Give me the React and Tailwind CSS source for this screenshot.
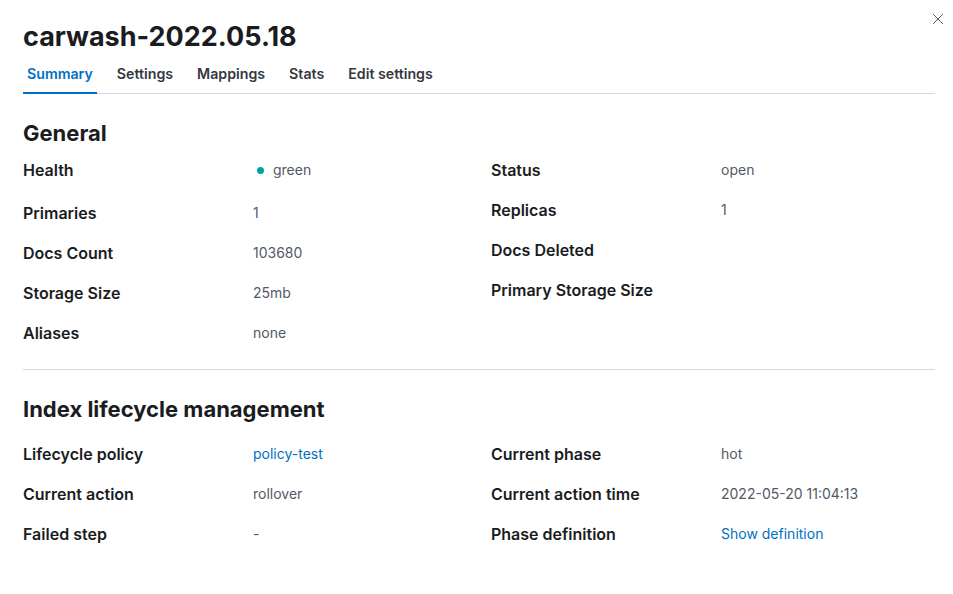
import { useState } from "react";

const CloseIcon = () => (
  <svg className="w-[12px] h-[12px] text-[#343741]" viewBox="0 0 16 16" fill="none" stroke="currentColor">
    <path strokeWidth={1.1} d="M1.5 1.5l13 13M14.5 1.5l-13 13" />
  </svg>
);

const tabs = ["Summary", "Settings", "Mappings", "Stats", "Edit settings"];

const Row = ({ label, children, tall }) => (
  <div className={`flex items-start pt-[4px] ${tall ? "h-[43px]" : "h-[40px]"}`}>
    <div className="w-[230px] shrink-0 text-[16px] leading-[24px] font-semibold text-[#1a1c21]">{label}</div>
    <div className="text-[14px] leading-[24px] text-[#535966]">{children}</div>
  </div>
);

const Link = ({ children }) => (
  <span className="text-[#0071c2] cursor-pointer hover:underline">{children}</span>
);

export default function App() {
  const [active, setActive] = useState("Summary");

  return (
    <div className="relative w-[953px] h-[594px] bg-white font-['Inter',sans-serif] text-[#1a1c21] overflow-hidden">
      <button className="absolute top-[12px] right-[8px] p-[1px]">
        <CloseIcon />
      </button>

      <div className="px-[23px] pr-[18px]">
        {/* Header */}
        <h1 className="pt-[17px] text-[27px] leading-[40px] font-bold text-[#1a1c21]">
          carwash-2022.05.18
        </h1>
        <div className="flex gap-[16px] border-b border-[#d3dae6] h-[38px] mt-[-1px]">
          {tabs.map((t) => (
            <button
              key={t}
              onClick={() => setActive(t)}
              className={`px-[4px] text-[14.2px] font-semibold leading-[20px] border-b-2 -mb-px pb-[1px] ${
                active === t ? "text-[#0071c2] border-[#0071c2]" : "text-[#343741] border-transparent"
              }`}
            >
              {t}
            </button>
          ))}
        </div>

        {/* General */}
        <h2 className="mt-[25px] text-[22px] leading-[28px] font-bold text-[#1a1c21]">General</h2>
        <div className="grid grid-cols-2 gap-x-[24px] mt-[7px]">
          <div className="flex flex-col">
            <Row label="Health" tall>
              <span className="flex items-center gap-[9px] ml-[4px]">
                <span className="w-[7px] h-[7px] rounded-full bg-[#00a69b]" />
                green
              </span>
            </Row>
            <Row label="Primaries">1</Row>
            <Row label="Docs Count">103680</Row>
            <Row label="Storage Size">25mb</Row>
            <Row label="Aliases">none</Row>
          </div>
          <div className="flex flex-col">
            <Row label="Status">open</Row>
            <Row label="Replicas">1</Row>
            <Row label="Docs Deleted"></Row>
            <Row label="Primary Storage Size"></Row>
          </div>
        </div>
        <hr className="mt-[12px] border-t border-[#d3dae6]" />

        {/* ILM */}
        <h2 className="mt-[25px] text-[22px] leading-[28px] font-bold text-[#1a1c21]">Index lifecycle management</h2>
        <div className="grid grid-cols-2 gap-x-[24px] mt-[15px]">
          <div className="flex flex-col">
            <Row label="Lifecycle policy"><Link>policy-test</Link></Row>
            <Row label="Current action">rollover</Row>
            <Row label="Failed step">-</Row>
          </div>
          <div className="flex flex-col">
            <Row label="Current phase">hot</Row>
            <Row label="Current action time">2022-05-20 11:04:13</Row>
            <Row label="Phase definition"><Link>Show definition</Link></Row>
          </div>
        </div>
      </div>
    </div>
  );
}
